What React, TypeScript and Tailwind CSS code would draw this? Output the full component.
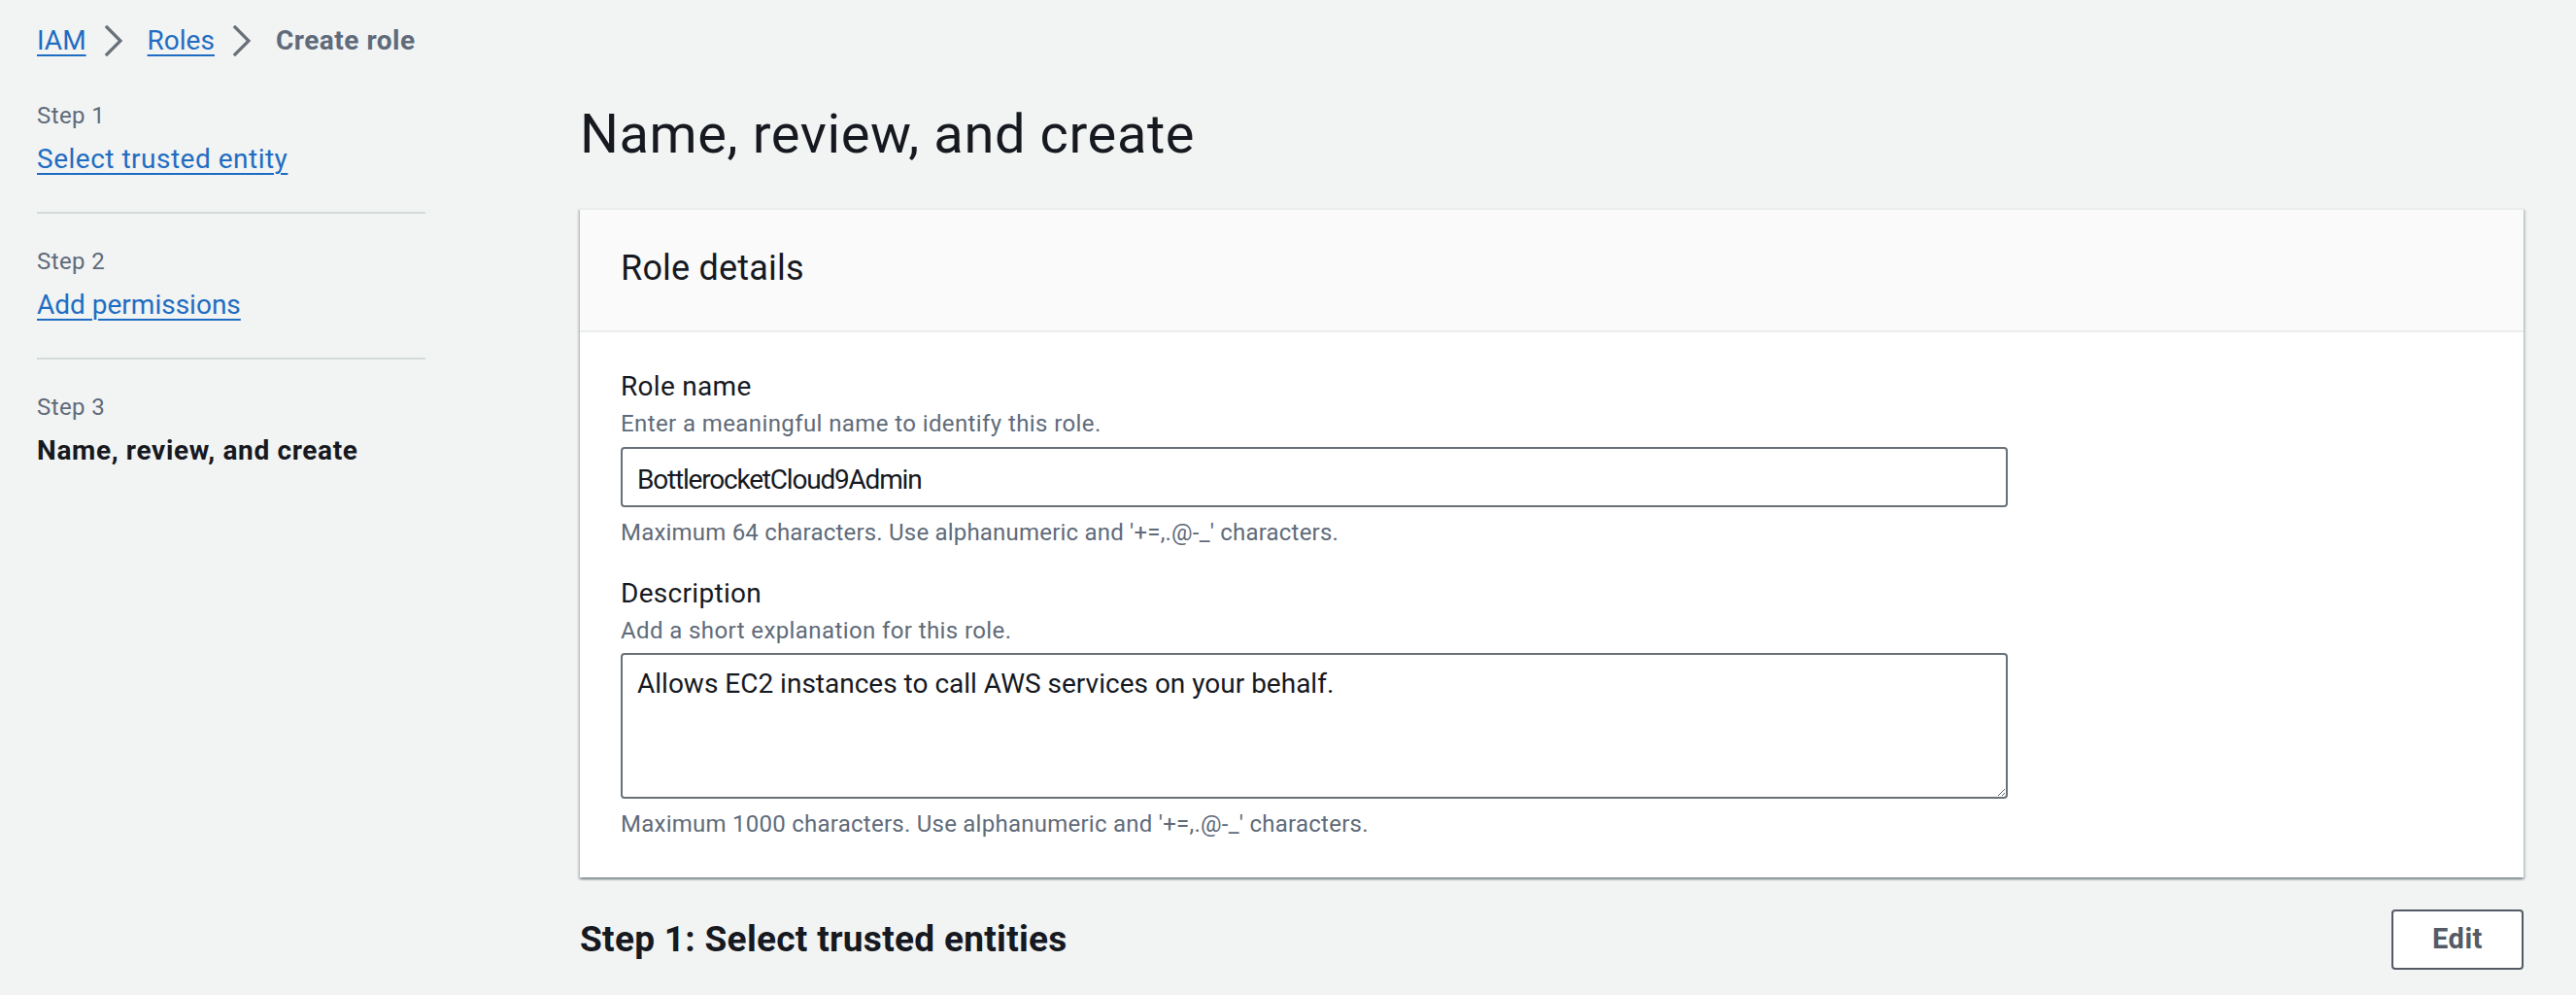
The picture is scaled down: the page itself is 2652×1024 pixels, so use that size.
import React from "react";

const steps = [
  { n: 1, label: "Select trusted entity", active: false, track: "tracking-[0.5px]" },
  { n: 2, label: "Add permissions", active: false, track: "tracking-[0px]" },
  { n: 3, label: "Name, review, and create", active: true, track: "tracking-[0.65px]" },
];

function Chevron() {
  return (
    <svg width="20" height="32" viewBox="0 0 20 32" className="shrink-0">
      <path d="M3 2 L17 16 L3 30" fill="none" stroke="#687078" strokeWidth="3.2" strokeLinecap="square" />
    </svg>
  );
}

const link = "text-[#1f6dc2] underline decoration-2 underline-offset-[5px]";

export default function App() {
  return (
    <div
      id="create_role_page"
      className="min-h-screen w-full bg-[#f2f3f3] text-[#16191f] font-['Roboto','Liberation_Sans',sans-serif]"
    >
      {/* Breadcrumbs */}
      <nav className="flex items-center pl-[38px] pt-[22px] text-[28px] leading-[40px]">
        <a href="#" className={link}>IAM</a>
        <span className="ml-[18px] mr-[25px] flex items-center"><Chevron /></span>
        <a href="#" className={link}>Roles</a>
        <span className="ml-[18px] mr-[25px] flex items-center"><Chevron /></span>
        <span className="font-bold tracking-[0.5px] text-[#5f6b7a]">Create role</span>
      </nav>

      <div className="flex">
        {/* Wizard steps */}
        <aside className="w-[438px] shrink-0 pl-[38px] pt-[41px]">
          {steps.map((s, i) => (
            <div key={s.n}>
              {i > 0 && <div className="h-[2px] bg-[#d5dbdb] mt-[34px] mb-[33px]" />}
              <div className="text-[24px] leading-[32px] tracking-[0.4px] text-[#5f6b7a]">Step {s.n}</div>
              <div className={`mt-[9px] text-[28px] leading-[40px] ${s.track}`}>
                {s.active ? (
                  <span className="font-bold text-[#16191f]">{s.label}</span>
                ) : (
                  <a href="#" className={link}>{s.label}</a>
                )}
              </div>
            </div>
          ))}
        </aside>

        {/* Main content */}
        <main className="flex-1 pl-[159px] pr-[54px] pt-[44px]">
          <h1 className="text-[56px] leading-[64px] font-normal tracking-[0.6px]">Name, review, and create</h1>

          <section className="mt-[44px] bg-white border-t-2 border-[#eaeded] shadow-[0_2px_2px_0_rgba(0,28,36,0.3),2px_2px_2px_0_rgba(0,28,36,0.15),-2px_2px_2px_0_rgba(0,28,36,0.15)]">
            <div className="bg-[#fafafa] border-b-2 border-[#eaeded] px-[42px] pt-[38px] pb-[42px]">
              <h2 className="text-[36px] leading-[44px] font-normal tracking-[0.2px]">Role details</h2>
            </div>

            <div className="px-[42px] pt-[36px] pb-[39px]">
              <label className="block text-[28px] leading-[40px] tracking-[0.3px]">Role name</label>
              <p className="mt-[2px] text-[24px] leading-[32px] tracking-[0.4px] text-[#5f6b7a]">Enter a meaningful name to identify this role.</p>
              <input
                readOnly
                value="BottlerocketCloud9Admin"
                className="mt-[8px] block w-[1428px] h-[62px] border-2 border-[#687078] rounded-[4px] px-[15px] pt-[4px] text-[28px] leading-[40px] tracking-[-1.2px] text-[#16191f] bg-white outline-none"
              />
              <p className="mt-[10px] text-[24px] leading-[32px] tracking-[0.2px] text-[#5f6b7a]">
                Maximum 64 characters. Use alphanumeric and '+=,.@-_' characters.
              </p>

              <label className="block mt-[27px] text-[28px] leading-[40px] tracking-[0.3px]">Description</label>
              <p className="mt-[2px] text-[24px] leading-[32px] tracking-[0.4px] text-[#5f6b7a]">Add a short explanation for this role.</p>
              <textarea
                readOnly
                value="Allows EC2 instances to call AWS services on your behalf."
                className="mt-[7px] block w-[1428px] h-[150px] border-2 border-[#687078] rounded-[4px] px-[15px] py-[10px] text-[28px] leading-[40px] tracking-[0px] text-[#16191f] bg-white outline-none resize-y"
              />
              <p className="mt-[10px] text-[24px] leading-[32px] tracking-[0.25px] text-[#5f6b7a]">
                Maximum 1000 characters. Use alphanumeric and '+=,.@-_' characters.
              </p>
            </div>
          </section>

          <div className="mt-[33px] flex items-center justify-between">
            <h2 className="text-[37px] leading-[44px] font-bold tracking-[0.3px]">Step 1: Select trusted entities</h2>
            <button className="w-[136px] h-[62px] border-2 border-[#545b64] rounded-[4px] bg-white text-[29px] font-bold tracking-[0.5px] text-[#545b64]">
              Edit
            </button>
          </div>
        </main>
      </div>
    </div>
  );
}
